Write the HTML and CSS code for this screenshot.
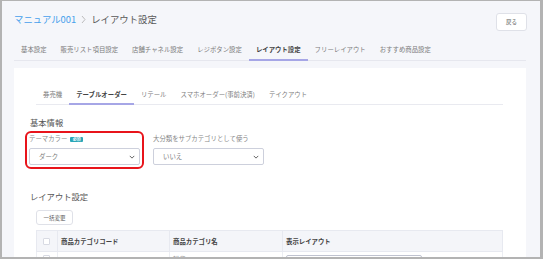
FILE: index.html
```html
<!DOCTYPE html>
<html lang="ja">
<head>
  <meta charset="UTF-8">
  <title>レイアウト設定</title>
  <link rel="stylesheet" href="styles.css">
</head>
<body>
  <div class="frame">

    <header class="page-head">
      <div class="crumbs">
        <a href="#" class="crumb-link">マニュアル001</a>
        <svg class="crumb-sep" viewBox="0 0 5 9" fill="none" stroke="currentColor" stroke-width="0.9">
          <path d="M1 1l3 3.5L1 8"/>
        </svg>
        <span class="crumb-current">レイアウト設定</span>
      </div>
      <button class="back-btn">戻る</button>
    </header>

    <nav class="tabs">
      <a href="#" class="tab">基本設定</a>
      <a href="#" class="tab">販売リスト項目設定</a>
      <a href="#" class="tab">店舗チャネル設定</a>
      <a href="#" class="tab">レジボタン設定</a>
      <a href="#" class="tab active">レイアウト設定</a>
      <a href="#" class="tab">フリーレイアウト</a>
      <a href="#" class="tab">おすすめ商品設定</a>
    </nav>

    <section class="card">
      <nav class="subtabs">
        <a href="#" class="subtab">券売機</a>
        <a href="#" class="subtab active">テーブルオーダー</a>
        <a href="#" class="subtab">リテール</a>
        <a href="#" class="subtab">スマホオーダー(事前決済)</a>
        <a href="#" class="subtab">テイクアウト</a>
      </nav>

      <h2 class="section-title">基本情報</h2>
      <div class="form-row">
        <div class="field highlight">
          <label class="field-label">テーマカラー <span class="badge">必須</span></label>
          <div class="select">
            <span>ダーク</span>
            <svg class="chev" viewBox="0 0 8 5" fill="none" stroke="currentColor" stroke-width="1.2"><path d="M1 1l3 3 3-3"/></svg>
          </div>
        </div>
        <div class="field">
          <label class="field-label">大分類をサブカテゴリとして使う</label>
          <div class="select">
            <span>いいえ</span>
            <svg class="chev" viewBox="0 0 8 5" fill="none" stroke="currentColor" stroke-width="1.2"><path d="M1 1l3 3 3-3"/></svg>
          </div>
        </div>
      </div>

      <h2 class="section-title layout-title">レイアウト設定</h2>
      <div class="layout-body">
        <button class="bulk-btn">一括変更</button>
        <table class="cat-table">
          <colgroup>
            <col class="col-check">
            <col class="col-code">
            <col class="col-name">
            <col>
          </colgroup>
          <thead>
            <tr>
              <th><span class="check"></span></th>
              <th>商品カテゴリコード</th>
              <th>商品カテゴリ名</th>
              <th>表示レイアウト</th>
            </tr>
          </thead>
          <tbody>
            <tr>
              <td><span class="check"></span></td>
              <td class="muted">C100001</td>
              <td class="muted">雑貨</td>
              <td><div class="row-select"></div></td>
            </tr>
          </tbody>
        </table>
      </div>
    </section>

  </div>
</body>
</html>
```

FILE: styles.css
```css
* {
  box-sizing: border-box;
}

body {
  margin: 0;
  font-family: "Noto Sans CJK JP", "Noto Sans", sans-serif;
  color: #555;
}

.frame {
  width: 543px;
  height: 259px;
  overflow: hidden;
  background: #f5f6fa;
  border-style: solid;
  border-color: #b3b3b3;
  border-width: 1px 3px 2px 2px;
}

/* Header */
.page-head {
  display: flex;
  justify-content: space-between;
  align-items: flex-start;
  padding: 11px 13px 0 12px;
  height: 38px;
}

.crumbs {
  display: flex;
  align-items: center;
  font-size: 9.4px;
  line-height: 14px;
}

.crumb-link {
  color: #46a0ec;
  text-decoration: none;
}

.crumb-sep {
  width: 5px;
  height: 9px;
  margin: 0 5px 0 5px;
  color: #b5b5b5;
}

.crumb-current {
  color: #585858;
}

.back-btn {
  margin-top: 1px;
  width: 31px;
  height: 18px;
  padding: 0;
  background: #fff;
  border: 1px solid #dfe1e8;
  border-radius: 3px;
  font-family: inherit;
  font-size: 5.5px;
  color: #555;
}

/* Top tabs */
.tabs {
  display: flex;
  margin: 0 14px 0 12px;
  border-bottom: 1px solid #e6e7ee;
}

.tab {
  padding: 0 7px;
  height: 22px;
  line-height: 21px;
  font-size: 6.4px;
  color: #7c7c7c;
  text-decoration: none;
  border-bottom: 2px solid transparent;
  margin-bottom: -1px;
}

.tab.active {
  color: #444;
  font-weight: 700;
  border-bottom-color: #a6a6e6;
}

/* Card */
.card {
  margin: 7px 14px 0 12px;
  background: #fff;
  padding: 17px 16px 0 15px;
  height: 200px;
}

.subtabs {
  display: flex;
  margin: 0 7px 0 7px;
  border-bottom: 1px solid #e9eaf0;
}

.subtab {
  padding: 0 7px;
  height: 20px;
  line-height: 19px;
  font-size: 6.4px;
  color: #7c7c7c;
  text-decoration: none;
  border-bottom: 2px solid transparent;
  margin-bottom: -1px;
}

.subtab.active {
  color: #444;
  font-weight: 700;
  border-bottom-color: #a6a6e6;
}

.section-title {
  margin: 11px 0 0 1px;
  font-size: 8.3px;
  line-height: 12px;
  font-weight: 400;
  color: #555;
}

.form-row {
  display: grid;
  grid-template-columns: 111px 111px;
  gap: 13px;
  margin-top: 7px;
}

.field {
  position: relative;
}

.field.highlight::after {
  content: "";
  position: absolute;
  top: -4px;
  left: -4px;
  right: -4px;
  bottom: -4px;
  border: 2px solid #e8141b;
  border-radius: 6px;
}

.field-label {
  display: flex;
  align-items: center;
  gap: 3px;
  height: 8px;
  font-size: 6.4px;
  line-height: 8px;
  color: #888;
}

.badge {
  display: inline-block;
  width: 13px;
  height: 5px;
  line-height: 5px;
  border-radius: 1px;
  background: #2aa6b7;
  color: #fff;
  font-size: 4px;
  font-weight: 700;
  text-align: center;
}

.select {
  display: flex;
  justify-content: space-between;
  align-items: center;
  margin-top: 5px;
  height: 17px;
  padding: 0 4px 0 9px;
  border: 1px solid #cdd0dc;
  border-radius: 2px;
  font-size: 6.4px;
  color: #777;
}

.chev {
  width: 6px;
  height: 4px;
  color: #555;
}

.layout-title {
  margin-top: 25px;
}

.layout-body {
  margin: 8px 7px 0 7px;
}

.bulk-btn {
  display: block;
  width: 37px;
  height: 15px;
  padding: 0;
  background: #fff;
  border: 1px solid #dfe1e8;
  border-radius: 3px;
  font-family: inherit;
  font-size: 5.5px;
  color: #555;
}

.cat-table {
  margin-top: 5px;
  width: 100%;
  table-layout: fixed;
  border-collapse: collapse;
  font-size: 6.4px;
}

.col-check {
  width: 21px;
}

.col-code {
  width: 112px;
}

.col-name {
  width: 113px;
}

.cat-table th {
  height: 21px;
  padding: 0 3px;
  background: #f4f5f9;
  border: 1px solid #e7e9f0;
  text-align: left;
  font-weight: 700;
  color: #444;
}

.cat-table td {
  height: 21px;
  padding: 3px 3px 0;
  border: 1px solid #eceef3;
  vertical-align: top;
  color: #999;
}

.check {
  display: block;
  width: 7px;
  height: 7px;
  margin-left: 3px;
  background: #fff;
  border: 1px solid #d8dae3;
  border-radius: 1px;
}

.row-select {
  width: 136px;
  height: 14px;
  border: 1px solid #bfc2cf;
  border-radius: 2px;
}
```
